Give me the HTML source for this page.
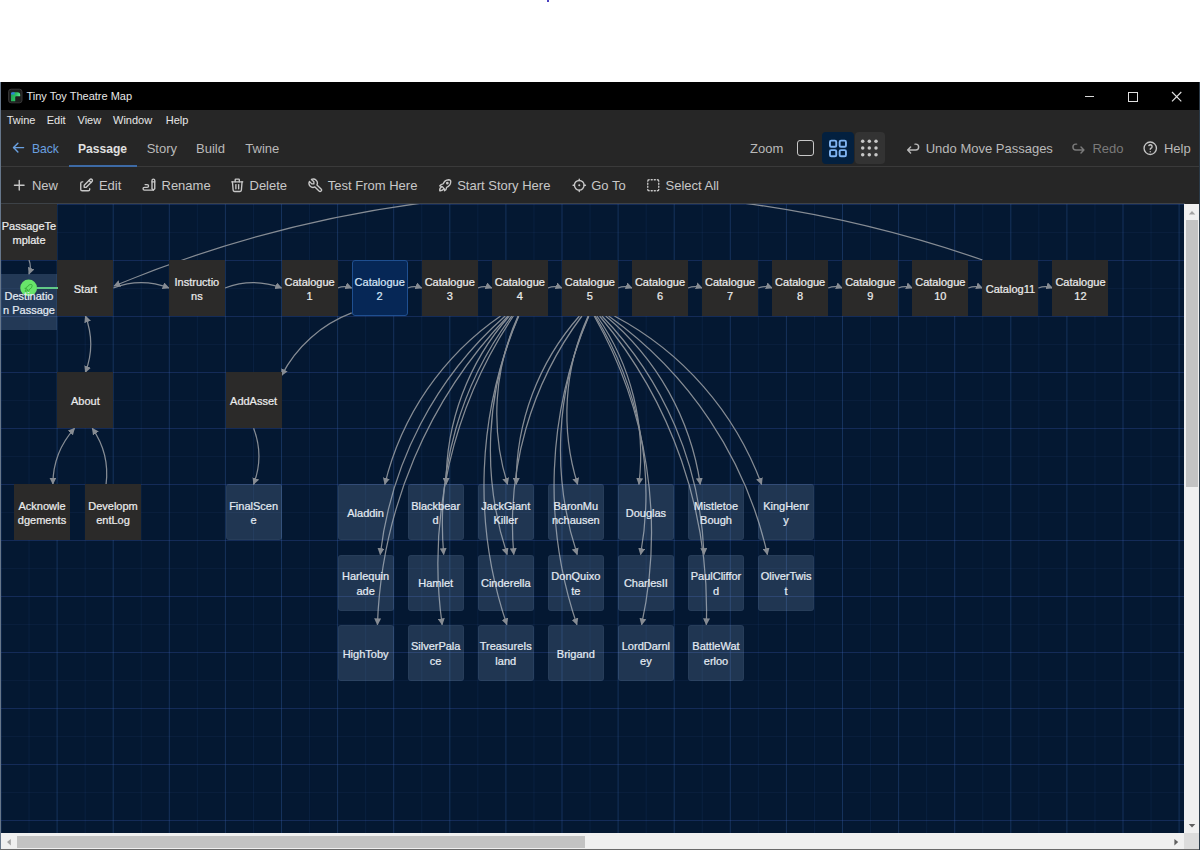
<!DOCTYPE html>
<html><head><meta charset="utf-8">
<style>
*{margin:0;padding:0;box-sizing:border-box}
html,body{width:1200px;height:850px;overflow:hidden;background:#fff;font-family:"Liberation Sans",sans-serif}
.abs{position:absolute}
.t{white-space:nowrap;line-height:1}
#dot{position:absolute;left:547px;top:0;width:2px;height:2px;background:#4b40c0}
#win{position:absolute;left:0;top:82px;width:1200px;height:768px;background:#262626;border-left:1px solid #66768a}
#title{position:absolute;left:1px;top:82px;width:1199px;height:28px;background:#000}
#sep1{position:absolute;left:1px;top:166px;width:1199px;height:1px;background:#3a3a3a}
#sep2{position:absolute;left:1px;top:203px;width:1184px;height:1px;background:#3d4247}
#map{position:absolute;left:1px;top:204px;width:1183px;height:629px;overflow:hidden;background:#041832}
#map svg.grid{position:absolute;left:-1px;top:-204px;width:1200px;height:850px}
#map svg.links{position:absolute;left:-1px;top:-204px;width:1200px;height:850px}
#map svg.links path{fill:none;stroke:#868c94;stroke-width:1.25}
.p{position:absolute;width:56px;height:56px;display:flex;align-items:center;justify-content:center;text-align:center;font-size:11px;line-height:14.3px;color:#ececec;padding-top:2px;-webkit-text-stroke:0.22px currentColor}
.p.dark{background:#2b2a29}
.p.light{background:rgba(160,190,230,0.185);border-radius:3px;color:#e4ebf3;box-shadow:inset 0 0 0 1px rgba(170,200,240,0.05)}
.p.dest{background:rgba(160,190,230,0.2);color:#e4ebf3}
.p.sel{background:#062756;border:1px solid #1f4f90;border-radius:3px;color:#d5e5f8}
#vs{position:absolute;left:1184px;top:204px;width:15px;height:629px;background:#f0f0f0}
#hs{position:absolute;left:1px;top:833px;width:1183px;height:17px;background:#f0f0f0}
#vthumb{position:absolute;left:1186px;top:220px;width:11.5px;height:267px;background:#c3c3c3}
#hthumb{position:absolute;left:17px;top:836px;width:568px;height:12px;background:#c3c3c3}
#corner{position:absolute;left:1184px;top:833px;width:16px;height:17px;background:#dcdcdc}
#rb{position:absolute;left:1199px;top:82px;width:1px;height:768px;background:#2a3a48}
</style></head><body>
<div id="dot"></div>
<div id="win"></div>
<div id="title"></div>
<div id="sep1"></div>
<div id="sep2"></div>
<div id="map">
<svg class="grid" viewBox="0 0 1200 850"><rect x="0.50" y="204" width="1" height="629" fill="rgba(70,120,200,0.28)"/>
<rect x="28.55" y="204" width="1" height="629" fill="rgba(60,100,170,0.12)"/>
<rect x="56.60" y="204" width="1" height="629" fill="rgba(70,120,200,0.28)"/>
<rect x="84.65" y="204" width="1" height="629" fill="rgba(60,100,170,0.12)"/>
<rect x="112.70" y="204" width="1" height="629" fill="rgba(70,120,200,0.28)"/>
<rect x="140.75" y="204" width="1" height="629" fill="rgba(60,100,170,0.12)"/>
<rect x="168.80" y="204" width="1" height="629" fill="rgba(70,120,200,0.28)"/>
<rect x="196.85" y="204" width="1" height="629" fill="rgba(60,100,170,0.12)"/>
<rect x="224.90" y="204" width="1" height="629" fill="rgba(70,120,200,0.28)"/>
<rect x="252.95" y="204" width="1" height="629" fill="rgba(60,100,170,0.12)"/>
<rect x="281.00" y="204" width="1" height="629" fill="rgba(70,120,200,0.28)"/>
<rect x="309.05" y="204" width="1" height="629" fill="rgba(60,100,170,0.12)"/>
<rect x="337.10" y="204" width="1" height="629" fill="rgba(70,120,200,0.28)"/>
<rect x="365.15" y="204" width="1" height="629" fill="rgba(60,100,170,0.12)"/>
<rect x="393.20" y="204" width="1" height="629" fill="rgba(70,120,200,0.28)"/>
<rect x="421.25" y="204" width="1" height="629" fill="rgba(60,100,170,0.12)"/>
<rect x="449.30" y="204" width="1" height="629" fill="rgba(70,120,200,0.28)"/>
<rect x="477.35" y="204" width="1" height="629" fill="rgba(60,100,170,0.12)"/>
<rect x="505.40" y="204" width="1" height="629" fill="rgba(70,120,200,0.28)"/>
<rect x="533.45" y="204" width="1" height="629" fill="rgba(60,100,170,0.12)"/>
<rect x="561.50" y="204" width="1" height="629" fill="rgba(70,120,200,0.28)"/>
<rect x="589.55" y="204" width="1" height="629" fill="rgba(60,100,170,0.12)"/>
<rect x="617.60" y="204" width="1" height="629" fill="rgba(70,120,200,0.28)"/>
<rect x="645.65" y="204" width="1" height="629" fill="rgba(60,100,170,0.12)"/>
<rect x="673.70" y="204" width="1" height="629" fill="rgba(70,120,200,0.28)"/>
<rect x="701.75" y="204" width="1" height="629" fill="rgba(60,100,170,0.12)"/>
<rect x="729.80" y="204" width="1" height="629" fill="rgba(70,120,200,0.28)"/>
<rect x="757.85" y="204" width="1" height="629" fill="rgba(60,100,170,0.12)"/>
<rect x="785.90" y="204" width="1" height="629" fill="rgba(70,120,200,0.28)"/>
<rect x="813.95" y="204" width="1" height="629" fill="rgba(60,100,170,0.12)"/>
<rect x="842.00" y="204" width="1" height="629" fill="rgba(70,120,200,0.28)"/>
<rect x="870.05" y="204" width="1" height="629" fill="rgba(60,100,170,0.12)"/>
<rect x="898.10" y="204" width="1" height="629" fill="rgba(70,120,200,0.28)"/>
<rect x="926.15" y="204" width="1" height="629" fill="rgba(60,100,170,0.12)"/>
<rect x="954.20" y="204" width="1" height="629" fill="rgba(70,120,200,0.28)"/>
<rect x="982.25" y="204" width="1" height="629" fill="rgba(60,100,170,0.12)"/>
<rect x="1010.30" y="204" width="1" height="629" fill="rgba(70,120,200,0.28)"/>
<rect x="1038.35" y="204" width="1" height="629" fill="rgba(60,100,170,0.12)"/>
<rect x="1066.40" y="204" width="1" height="629" fill="rgba(70,120,200,0.28)"/>
<rect x="1094.45" y="204" width="1" height="629" fill="rgba(60,100,170,0.12)"/>
<rect x="1122.50" y="204" width="1" height="629" fill="rgba(70,120,200,0.28)"/>
<rect x="1150.55" y="204" width="1" height="629" fill="rgba(60,100,170,0.12)"/>
<rect x="1178.60" y="204" width="1" height="629" fill="rgba(70,120,200,0.28)"/>
<rect x="0" y="204" width="1184" height="1" fill="rgba(60,90,180,0.3)"/>
<rect x="0" y="232" width="1184" height="1" fill="rgba(60,90,160,0.1)"/>
<rect x="0" y="260" width="1184" height="1" fill="rgba(60,90,180,0.3)"/>
<rect x="0" y="288" width="1184" height="1" fill="rgba(60,90,160,0.1)"/>
<rect x="0" y="316" width="1184" height="1" fill="rgba(60,90,180,0.3)"/>
<rect x="0" y="344" width="1184" height="1" fill="rgba(60,90,160,0.1)"/>
<rect x="0" y="372" width="1184" height="1" fill="rgba(60,90,180,0.3)"/>
<rect x="0" y="400" width="1184" height="1" fill="rgba(60,90,160,0.1)"/>
<rect x="0" y="428" width="1184" height="1" fill="rgba(60,90,180,0.3)"/>
<rect x="0" y="456" width="1184" height="1" fill="rgba(60,90,160,0.1)"/>
<rect x="0" y="484" width="1184" height="1" fill="rgba(60,90,180,0.3)"/>
<rect x="0" y="512" width="1184" height="1" fill="rgba(60,90,160,0.1)"/>
<rect x="0" y="540" width="1184" height="1" fill="rgba(60,90,180,0.3)"/>
<rect x="0" y="568" width="1184" height="1" fill="rgba(60,90,160,0.1)"/>
<rect x="0" y="596" width="1184" height="1" fill="rgba(60,90,180,0.3)"/>
<rect x="0" y="624" width="1184" height="1" fill="rgba(60,90,160,0.1)"/>
<rect x="0" y="652" width="1184" height="1" fill="rgba(60,90,180,0.3)"/>
<rect x="0" y="680" width="1184" height="1" fill="rgba(60,90,160,0.1)"/>
<rect x="0" y="708" width="1184" height="1" fill="rgba(60,90,180,0.3)"/>
<rect x="0" y="736" width="1184" height="1" fill="rgba(60,90,160,0.1)"/>
<rect x="0" y="764" width="1184" height="1" fill="rgba(60,90,180,0.3)"/>
<rect x="0" y="792" width="1184" height="1" fill="rgba(60,90,160,0.1)"/>
<rect x="0" y="820" width="1184" height="1" fill="rgba(60,90,180,0.3)"/></svg>
<svg class="links" viewBox="0 0 1200 850"><defs><marker id="ah" viewBox="0 0 10 10" refX="9" refY="5" markerWidth="5.6" markerHeight="5.6" orient="auto-start-reverse"><path d="M0,0 L10,5 L0,10 z" style="fill:#878c93;stroke:none"/></marker></defs>
<path d="M113.40,288.00 A77.70,77.70 0 0 1 168.90,288.00" marker-end="url(#ah)"/>
<path d="M224.90,288.00 A79.38,79.38 0 0 1 281.60,288.00" marker-end="url(#ah)"/>
<path d="M337.60,288.00 A19.71,19.71 0 0 1 351.68,288.00" marker-end="url(#ah)"/>
<path d="M407.68,288.00 A19.71,19.71 0 0 1 421.76,288.00" marker-end="url(#ah)"/>
<path d="M477.76,288.00 A19.71,19.71 0 0 1 491.84,288.00" marker-end="url(#ah)"/>
<path d="M547.84,288.00 A19.71,19.71 0 0 1 561.92,288.00" marker-end="url(#ah)"/>
<path d="M617.92,288.00 A19.71,19.71 0 0 1 632.00,288.00" marker-end="url(#ah)"/>
<path d="M688.00,288.00 A19.71,19.71 0 0 1 702.08,288.00" marker-end="url(#ah)"/>
<path d="M758.08,288.00 A19.71,19.71 0 0 1 772.16,288.00" marker-end="url(#ah)"/>
<path d="M828.16,288.00 A19.71,19.71 0 0 1 842.24,288.00" marker-end="url(#ah)"/>
<path d="M898.24,288.00 A19.71,19.71 0 0 1 912.32,288.00" marker-end="url(#ah)"/>
<path d="M968.32,288.00 A19.71,19.71 0 0 1 982.40,288.00" marker-end="url(#ah)"/>
<path d="M1038.40,288.00 A19.71,19.71 0 0 1 1052.48,288.00" marker-end="url(#ah)"/>
<path d="M351.68,312.94 A131.39,131.39 0 0 0 281.60,375.36" marker-end="url(#ah)"/>
<path d="M85.40,316.00 A78.82,78.82 0 0 1 85.40,372.30" marker-end="url(#ah)" marker-start="url(#ah)"/>
<path d="M52.88,484.00 A83.66,83.66 0 0 1 74.52,428.30" marker-end="url(#ah)" marker-start="url(#ah)"/>
<path d="M106.08,484.00 A80.33,80.33 0 0 0 92.32,428.30" marker-end="url(#ah)"/>
<path d="M253.60,428.30 A78.40,78.40 0 0 1 253.60,484.30" marker-end="url(#ah)"/>
<path d="M29.00,260.00 A19.60,19.60 0 0 1 29.00,274.00" marker-end="url(#ah)"/>
<path d="M500.59,316.00 A285.95,285.95 0 0 0 384.85,484.30" marker-end="url(#ah)"/>
<path d="M509.33,316.00 A251.66,251.66 0 0 0 446.19,484.30" marker-end="url(#ah)"/>
<path d="M518.08,316.00 A236.08,236.08 0 0 0 507.52,484.30" marker-end="url(#ah)"/>
<path d="M505.18,316.00 A376.92,376.92 0 0 0 380.26,554.50" marker-end="url(#ah)"/>
<path d="M511.84,316.00 A347.27,347.27 0 0 0 443.68,554.50" marker-end="url(#ah)"/>
<path d="M518.50,316.00 A334.28,334.28 0 0 0 507.10,554.50" marker-end="url(#ah)"/>
<path d="M508.00,316.00 A469.24,469.24 0 0 0 377.44,624.70" marker-end="url(#ah)"/>
<path d="M513.38,316.00 A443.54,443.54 0 0 0 442.14,624.70" marker-end="url(#ah)"/>
<path d="M518.76,316.00 A432.50,432.50 0 0 0 506.84,624.70" marker-end="url(#ah)"/>
<path d="M579.41,316.00 A251.66,251.66 0 0 0 516.27,484.30" marker-end="url(#ah)"/>
<path d="M581.92,316.00 A347.27,347.27 0 0 0 513.76,554.50" marker-end="url(#ah)"/>
<path d="M588.16,316.00 A236.08,236.08 0 0 0 577.60,484.30" marker-end="url(#ah)"/>
<path d="M588.58,316.00 A334.28,334.28 0 0 0 577.18,554.50" marker-end="url(#ah)"/>
<path d="M588.84,316.00 A432.50,432.50 0 0 0 576.92,624.70" marker-end="url(#ah)"/>
<path d="M596.91,316.00 A242.85,242.85 0 0 1 638.93,484.30" marker-end="url(#ah)"/>
<path d="M595.24,316.00 A339.88,339.88 0 0 1 640.60,554.50" marker-end="url(#ah)"/>
<path d="M594.22,316.00 A437.25,437.25 0 0 1 641.62,624.70" marker-end="url(#ah)"/>
<path d="M605.66,316.00 A270.29,270.29 0 0 1 700.26,484.30" marker-end="url(#ah)"/>
<path d="M601.91,316.00 A363.21,363.21 0 0 1 704.01,554.50" marker-end="url(#ah)"/>
<path d="M599.60,316.00 A457.28,457.28 0 0 1 706.32,624.70" marker-end="url(#ah)"/>
<path d="M614.41,316.00 A313.01,313.01 0 0 1 761.59,484.30" marker-end="url(#ah)"/>
<path d="M608.57,316.00 A401.19,401.19 0 0 1 767.43,554.50" marker-end="url(#ah)"/>
<path d="M982.5,260 A1221,1221 0 0 0 114,286" marker-end="url(#ah)"/>
</svg>
<div class="p dark" style="left:0.00px;top:0.00px"><span>PassageTe<br>mplate</span></div>
<div class="p dest" style="left:0.00px;top:70.00px"><span></span></div>
<div class="p dark" style="left:56.40px;top:56.00px"><span>Start</span></div>
<div class="p dark" style="left:167.90px;top:56.00px"><span>Instructio<br>ns</span></div>
<div class="p dark" style="left:280.60px;top:56.00px"><span>Catalogue<br>1</span></div>
<div class="p sel" style="left:350.68px;top:56.00px"><span>Catalogue<br>2</span></div>
<div class="p dark" style="left:420.76px;top:56.00px"><span>Catalogue<br>3</span></div>
<div class="p dark" style="left:490.84px;top:56.00px"><span>Catalogue<br>4</span></div>
<div class="p dark" style="left:560.92px;top:56.00px"><span>Catalogue<br>5</span></div>
<div class="p dark" style="left:631.00px;top:56.00px"><span>Catalogue<br>6</span></div>
<div class="p dark" style="left:701.08px;top:56.00px"><span>Catalogue<br>7</span></div>
<div class="p dark" style="left:771.16px;top:56.00px"><span>Catalogue<br>8</span></div>
<div class="p dark" style="left:841.24px;top:56.00px"><span>Catalogue<br>9</span></div>
<div class="p dark" style="left:911.32px;top:56.00px"><span>Catalogue<br>10</span></div>
<div class="p dark" style="left:981.40px;top:56.00px"><span>Catalog11</span></div>
<div class="p dark" style="left:1051.48px;top:56.00px"><span>Catalogue<br>12</span></div>
<div class="p dark" style="left:56.40px;top:168.30px"><span>About</span></div>
<div class="p dark" style="left:224.60px;top:168.30px"><span>AddAsset</span></div>
<div class="p dark" style="left:13.00px;top:280.00px"><span>Acknowle<br>dgements</span></div>
<div class="p dark" style="left:84.00px;top:280.00px"><span>Developm<br>entLog</span></div>
<div class="p light" style="left:224.60px;top:280.30px"><span>FinalScen<br>e</span></div>
<div class="p light" style="left:336.60px;top:280.30px"><span>Aladdin</span></div>
<div class="p light" style="left:406.68px;top:280.30px"><span>Blackbear<br>d</span></div>
<div class="p light" style="left:476.76px;top:280.30px"><span>JackGiant<br>Killer</span></div>
<div class="p light" style="left:546.84px;top:280.30px"><span>BaronMu<br>nchausen</span></div>
<div class="p light" style="left:616.92px;top:280.30px"><span>Douglas</span></div>
<div class="p light" style="left:687.00px;top:280.30px"><span>Mistletoe<br>Bough</span></div>
<div class="p light" style="left:757.08px;top:280.30px"><span>KingHenr<br>y</span></div>
<div class="p light" style="left:336.60px;top:350.50px"><span>Harlequin<br>ade</span></div>
<div class="p light" style="left:406.68px;top:350.50px"><span>Hamlet</span></div>
<div class="p light" style="left:476.76px;top:350.50px"><span>Cinderella</span></div>
<div class="p light" style="left:546.84px;top:350.50px"><span>DonQuixo<br>te</span></div>
<div class="p light" style="left:616.92px;top:350.50px"><span>CharlesII</span></div>
<div class="p light" style="left:687.00px;top:350.50px"><span>PaulCliffor<br>d</span></div>
<div class="p light" style="left:757.08px;top:350.50px"><span>OliverTwis<br>t</span></div>
<div class="p light" style="left:336.60px;top:420.70px"><span>HighToby</span></div>
<div class="p light" style="left:406.68px;top:420.70px"><span>SilverPala<br>ce</span></div>
<div class="p light" style="left:476.76px;top:420.70px"><span>TreasureIs<br>land</span></div>
<div class="p light" style="left:546.84px;top:420.70px"><span>Brigand</span></div>
<div class="p light" style="left:616.92px;top:420.70px"><span>LordDarnl<br>ey</span></div>
<div class="p light" style="left:687.00px;top:420.70px"><span>BattleWat<br>erloo</span></div>
<div class="abs" style="left:36px;top:83px;width:21px;height:2px;background:#62c987"></div>
<svg class="abs" style="left:18px;top:73.7px" width="20" height="20" viewBox="0 0 20 20"><circle cx="9.65" cy="9.9" r="8.4" fill="#68e46a"/><g transform="translate(4.4,4.6) scale(0.44)" fill="none" stroke="#3aa83a" stroke-width="2" stroke-linecap="round" stroke-linejoin="round"><path d="M4 13a8 8 0 0 1 7 7a6 6 0 0 0 3 -5a9 9 0 0 0 6 -8a3 3 0 0 0 -3 -3a9 9 0 0 0 -8 6a6 6 0 0 0 -5 3"/><path d="M7 14a6 6 0 0 0 -3 6a6 6 0 0 0 6 -3"/></g></svg>
<div class="p dest" style="left:0px;top:70px;background:none"><span>Destinatio<br>n Passage</span></div>
</div>
<div id="vs"></div><div id="vthumb"></div>
<div id="hs"></div><div id="hthumb"></div>
<div id="corner"></div>
<svg class="abs" style="left:1184px;top:204px" width="16" height="630" viewBox="0 0 16 630"><path d="M4.8 10.5L8 7L11.3 10.5Z" fill="#a3a3a3"/><path d="M4.8 620L8 623.4L11.3 620Z" fill="#606060"/></svg>
<svg class="abs" style="left:0;top:833px" width="1200" height="17" viewBox="0 0 1200 17"><path d="M10.8 6L7 9L10.8 12.4Z" fill="#a3a3a3"/><path d="M1174.4 6L1178.2 9L1174.4 12.4Z" fill="#606060"/></svg>
<div class="abs" style="left:0;top:849px;width:1200px;height:1px;background:#6a6a6a"></div>
<div id="rb"></div>
<div class="abs t" style="left:26.50px;top:91.49px;font-size:11.00px;color:#e8e8e8;">Tiny Toy Theatre Map</div>
<svg class="abs" style="left:0;top:82px" width="30" height="28" viewBox="0 82 30 28"><rect x="8.6" y="89.2" width="13.4" height="13.6" rx="2.5" fill="#1e1e1e" stroke="#3c3c3c" stroke-width="0.9"/><defs><linearGradient id="lg" x1="0" y1="0" x2="1" y2="0.3"><stop offset="0" stop-color="#1f9a55"/><stop offset="0.6" stop-color="#2bc060"/><stop offset="1" stop-color="#66e69a"/></linearGradient></defs><path d="M11 101.2V95Q11 92.2 14 92.2H17.5Q20.2 92.2 20.2 95V96.3H16.2Q15.2 96.3 15.2 97.3V101.2Z" fill="url(#lg)"/><path d="M11 94.6V93.5Q11 92.2 12.5 92.2H14.6V94.6Z" fill="#2f80d8"/></svg>
<div class="abs" style="left:1084.7px;top:95.6px;width:9.5px;height:1.3px;background:#d8d8d8"></div>
<div class="abs" style="left:1128px;top:92px;width:9.5px;height:9.5px;border:1px solid #e0e0e0"></div>
<svg class="abs" style="left:1171px;top:91px" width="11" height="11" viewBox="0 0 11 11"><path d="M1 1L10.3 10.3M10.3 1L1 10.3" stroke="#e0e0e0" stroke-width="1.15"/></svg>
<div class="abs t" style="left:6.70px;top:114.69px;font-size:11.00px;color:#e6e6e6;">Twine</div>
<div class="abs t" style="left:46.70px;top:114.69px;font-size:11.00px;color:#e6e6e6;">Edit</div>
<div class="abs t" style="left:77.50px;top:114.69px;font-size:11.00px;color:#e6e6e6;">View</div>
<div class="abs t" style="left:113.00px;top:114.69px;font-size:11.00px;color:#e6e6e6;">Window</div>
<div class="abs t" style="left:165.80px;top:114.69px;font-size:11.00px;color:#e6e6e6;">Help</div>
<svg class="abs" style="left:9.95px;top:139.20px;width:17.20px;height:17.20px;" viewBox="0 0 24 24" fill="none" stroke="#6aa0e0" stroke-width="2" stroke-linecap="round" stroke-linejoin="round"><path d="M5 12l14 0"/><path d="M5 12l6 6"/><path d="M5 12l6 -6"/></svg>
<div class="abs t" style="left:32.10px;top:142.30px;font-size:13.00px;color:#6aa0e0;transform:scaleX(0.93);transform-origin:0 0">Back</div>
<div class="abs t" style="left:78.40px;top:142.30px;font-size:13.00px;color:#e0e0e0;font-weight:bold;transform:scaleX(0.93);transform-origin:0 0">Passage</div>
<div class="abs t" style="left:146.70px;top:142.30px;font-size:13.00px;color:#b9b9b9;">Story</div>
<div class="abs t" style="left:196.00px;top:142.30px;font-size:13.00px;color:#b9b9b9;">Build</div>
<div class="abs t" style="left:245.30px;top:142.30px;font-size:13.00px;color:#b9b9b9;">Twine</div>
<div class="abs t" style="left:750.00px;top:142.30px;font-size:13.00px;color:#b9b9b9;">Zoom</div>
<div class="abs t" style="left:925.70px;top:142.30px;font-size:13.00px;color:#b9b9b9;">Undo Move Passages</div>
<div class="abs t" style="left:1092.40px;top:142.30px;font-size:13.00px;color:#7a7a7a;">Redo</div>
<div class="abs t" style="left:1163.90px;top:142.30px;font-size:13.00px;color:#b9b9b9;">Help</div>
<div class="abs" style="left:69px;top:165px;width:68px;height:2px;background:#3d6aa5"></div>
<div class="abs" style="left:797.3px;top:139.8px;width:16.8px;height:16.6px;border:1.9px solid #c8c8c8;border-radius:3px"></div>
<div class="abs" style="left:821.5px;top:132px;width:32.5px;height:32px;border-radius:4px;background:#03203f"></div>
<div class="abs" style="left:855px;top:132px;width:30px;height:32px;border-radius:4px;background:#333"></div>
<svg class="abs" style="left:820px;top:130px" width="70" height="36" viewBox="820 130 70 36"><rect x="829.95" y="140.65" width="6.3" height="6.1" rx="1.3" fill="none" stroke="#80b4f2" stroke-width="1.9"/><rect x="829.95" y="150.15" width="6.3" height="6.1" rx="1.3" fill="none" stroke="#80b4f2" stroke-width="1.9"/><rect x="839.65" y="140.65" width="6.3" height="6.1" rx="1.3" fill="none" stroke="#80b4f2" stroke-width="1.9"/><rect x="839.65" y="150.15" width="6.3" height="6.1" rx="1.3" fill="none" stroke="#80b4f2" stroke-width="1.9"/><circle cx="862.70" cy="141.30" r="1.75" fill="#c8c8c8"/><circle cx="862.70" cy="148.00" r="1.75" fill="#c8c8c8"/><circle cx="862.70" cy="154.70" r="1.75" fill="#c8c8c8"/><circle cx="869.30" cy="141.30" r="1.75" fill="#c8c8c8"/><circle cx="869.30" cy="148.00" r="1.75" fill="#c8c8c8"/><circle cx="869.30" cy="154.70" r="1.75" fill="#c8c8c8"/><circle cx="876.00" cy="141.30" r="1.75" fill="#c8c8c8"/><circle cx="876.00" cy="148.00" r="1.75" fill="#c8c8c8"/><circle cx="876.00" cy="154.70" r="1.75" fill="#c8c8c8"/></svg>
<svg class="abs" style="left:903.60px;top:139.10px;width:17.60px;height:17.60px;" viewBox="0 0 24 24" fill="none" stroke="#b9b9b9" stroke-width="2" stroke-linecap="round" stroke-linejoin="round"><path d="M9 11l-4 4l4 4m-4 -4h11a4 4 0 0 0 0 -8h-1"/></svg>
<svg class="abs" style="left:1070.30px;top:139.20px;width:17.60px;height:17.60px;" viewBox="0 0 24 24" fill="none" stroke="#7a7a7a" stroke-width="2" stroke-linecap="round" stroke-linejoin="round"><path d="M15 11l4 4l-4 4m4 -4h-11a4 4 0 0 1 0 -8h1"/></svg>
<svg class="abs" style="left:1141.50px;top:139.60px;width:16.50px;height:16.50px;" viewBox="0 0 24 24" fill="none" stroke="#c4c4c4" stroke-width="2" stroke-linecap="round" stroke-linejoin="round"><path d="M12 12m-9 0a9 9 0 1 0 18 0a9 9 0 1 0 -18 0"/><path d="M12 17l0 .01"/><path d="M12 13.5a1.5 1.5 0 0 1 1 -1.5a2.6 2.6 0 1 0 -3 -4"/></svg>
<svg class="abs" style="left:10.75px;top:177.20px;width:16.50px;height:16.50px;" viewBox="0 0 24 24" fill="none" stroke="#c8c8c8" stroke-width="2" stroke-linecap="round" stroke-linejoin="round"><path d="M12 5l0 14"/><path d="M5 12l14 0"/></svg>
<svg class="abs" style="left:78.20px;top:177.20px;width:16.50px;height:16.50px;" viewBox="0 0 24 24" fill="none" stroke="#c8c8c8" stroke-width="2" stroke-linecap="round" stroke-linejoin="round"><path d="M7 7h-1a2 2 0 0 0 -2 2v9a2 2 0 0 0 2 2h9a2 2 0 0 0 2 -2v-1"/><path d="M20.385 6.585a2.1 2.1 0 0 0 -2.97 -2.97l-8.415 8.385v3h3l8.385 -8.415z"/><path d="M16 5l3 3"/></svg>
<svg class="abs" style="left:140.70px;top:177.30px;width:16.50px;height:16.50px;" viewBox="0 0 24 24" fill="none" stroke="#c8c8c8" stroke-width="2" stroke-linecap="round" stroke-linejoin="round"><path d="M20 17v-12c0 -1.121 -.879 -2 -2 -2s-2 .879 -2 2v12l2 2l2 -2z"/><path d="M16 7h4"/><path d="M18 19h-13a2 2 0 1 1 0 -4h4a2 2 0 1 0 0 -4h-3"/></svg>
<svg class="abs" style="left:228.75px;top:177.20px;width:16.50px;height:16.50px;" viewBox="0 0 24 24" fill="none" stroke="#c8c8c8" stroke-width="2" stroke-linecap="round" stroke-linejoin="round"><path d="M4 7l16 0"/><path d="M10 11l0 6"/><path d="M14 11l0 6"/><path d="M5 7l1 12a2 2 0 0 0 2 2h8a2 2 0 0 0 2 -2l1 -12"/><path d="M9 7v-3a1 1 0 0 1 1 -1h4a1 1 0 0 1 1 1v3"/></svg>
<svg class="abs" style="left:306.90px;top:177.20px;width:16.50px;height:16.50px;" viewBox="0 0 24 24" fill="none" stroke="#c8c8c8" stroke-width="2" stroke-linecap="round" stroke-linejoin="round"><path d="M7 10h3v-3l-3.5 -3.5a6 6 0 0 1 8 8l6 6a2 2 0 0 1 -3 3l-6 -6a6 6 0 0 1 -8 -8l3.5 3.5"/></svg>
<svg class="abs" style="left:436.90px;top:177.20px;width:16.50px;height:16.50px;" viewBox="0 0 24 24" fill="none" stroke="#c8c8c8" stroke-width="2" stroke-linecap="round" stroke-linejoin="round"><path d="M4 13a8 8 0 0 1 7 7a6 6 0 0 0 3 -5a9 9 0 0 0 6 -8a3 3 0 0 0 -3 -3a9 9 0 0 0 -8 6a6 6 0 0 0 -5 3"/><path d="M7 14a6 6 0 0 0 -3 6a6 6 0 0 0 6 -3"/><path d="M15 9m-1 0a1 1 0 1 0 2 0a1 1 0 1 0 -2 0"/></svg>
<svg class="abs" style="left:570.50px;top:177.20px;width:16.50px;height:16.50px;" viewBox="0 0 24 24" fill="none" stroke="#c8c8c8" stroke-width="2" stroke-linecap="round" stroke-linejoin="round"><path d="M12 12m-.5 0a.5 .5 0 1 0 1 0a.5 .5 0 1 0 -1 0"/><path d="M12 12m-7 0a7 7 0 1 0 14 0a7 7 0 1 0 -14 0"/><path d="M12 3l0 2"/><path d="M3 12l2 0"/><path d="M12 19l0 2"/><path d="M19 12l2 0"/></svg>
<svg class="abs" style="left:645.40px;top:177.20px;width:16.50px;height:16.50px;" viewBox="0 0 24 24" fill="none" stroke="#c8c8c8" stroke-width="2" stroke-linecap="round" stroke-linejoin="round"><path d="M4 6a2 2 0 0 1 2 -2m3 0h1.5m3 0h1.5m3 0a2 2 0 0 1 2 2m0 3v1.5m0 3v1.5m0 3a2 2 0 0 1 -2 2m-3 0h-1.5m-3 0h-1.5m-3 0a2 2 0 0 1 -2 -2m0 -3v-1.5m0 -3v-1.5m0 -3"/></svg>
<div class="abs t" style="left:31.90px;top:179.30px;font-size:13.00px;color:#c8c8c8;">New</div>
<div class="abs t" style="left:98.90px;top:179.30px;font-size:13.00px;color:#c8c8c8;">Edit</div>
<div class="abs t" style="left:161.50px;top:179.30px;font-size:13.00px;color:#c8c8c8;">Rename</div>
<div class="abs t" style="left:249.50px;top:179.30px;font-size:13.00px;color:#c8c8c8;">Delete</div>
<div class="abs t" style="left:327.80px;top:179.30px;font-size:13.00px;color:#c8c8c8;">Test From Here</div>
<div class="abs t" style="left:457.20px;top:179.30px;font-size:13.00px;color:#c8c8c8;">Start Story Here</div>
<div class="abs t" style="left:591.20px;top:179.30px;font-size:13.00px;color:#c8c8c8;">Go To</div>
<div class="abs t" style="left:665.50px;top:179.30px;font-size:13.00px;color:#c8c8c8;">Select All</div>
</body></html>
